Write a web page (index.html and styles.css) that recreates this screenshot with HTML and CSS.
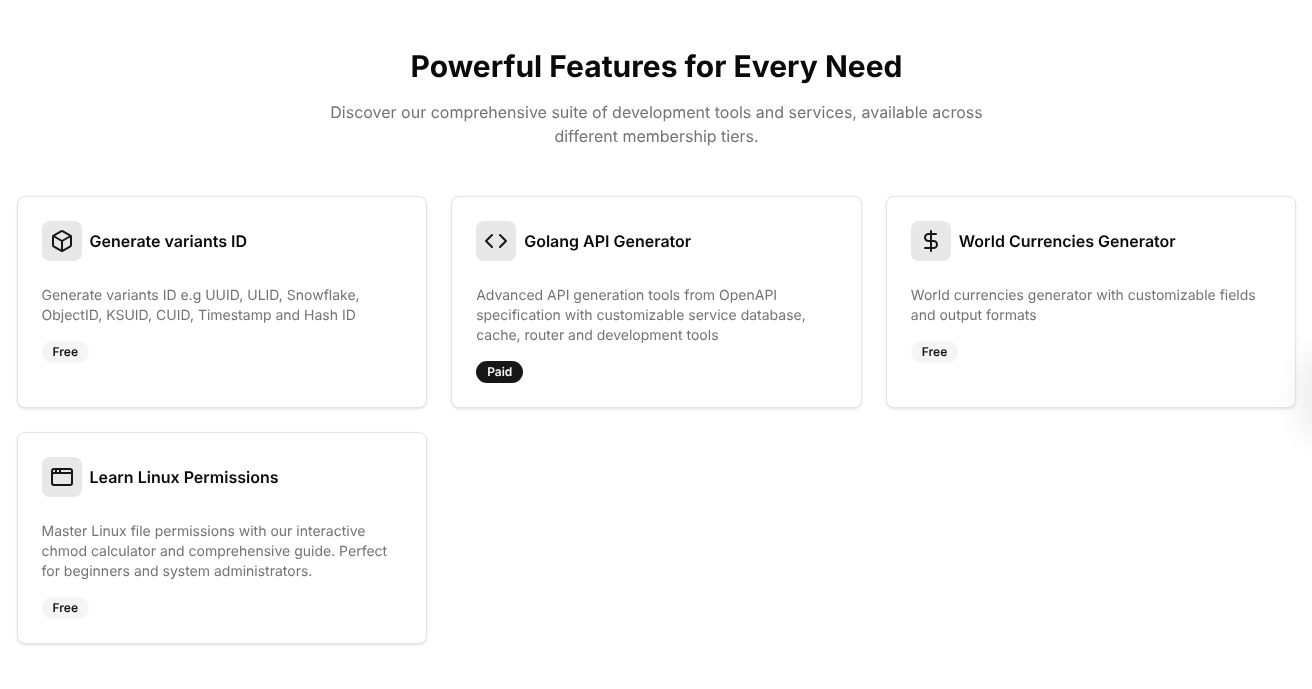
FILE: index.html
```html
<!DOCTYPE html>
<html lang="en">
<head>
<meta charset="utf-8">
<title>Powerful Features for Every Need</title>
<link rel="stylesheet" href="styles.css">
</head>
<body>
<main class="features">
  <header class="intro">
    <h1 class="title">Powerful Features for Every Need</h1>
    <p class="lead">Discover our comprehensive suite of development tools and services, available across different membership tiers.</p>
  </header>
  <section class="grid">
    <article class="card">
      <div class="card-head">
        <span class="icon"><svg viewBox="0 0 24 24" class="glyph"><path d="M21 8a2 2 0 0 0-1-1.730l-7-4a2 2 0 0 0-2 0l-7 4A2 2 0 0 0 3 8v8a2 2 0 0 0 1 1.730l7 4a2 2 0 0 0 2 0l7-4A2 2 0 0 0 21 16Z"/><path d="m3.300 7 8.700 5 8.700-5"/><path d="M12 22V12"/></svg></span>
        <h2 class="card-title">Generate variants ID</h2>
      </div>
      <p class="desc">Generate variants ID e.g UUID, ULID, Snowflake, ObjectID, KSUID, CUID, Timestamp and Hash ID</p>
      <span class="badge">Free</span>
    </article>
    <article class="card">
      <div class="card-head">
        <span class="icon"><svg viewBox="0 0 24 24" class="glyph"><path d="m16 18 6-6-6-6"/><path d="m8 6-6 6 6 6"/></svg></span>
        <h2 class="card-title">Golang API Generator</h2>
      </div>
      <p class="desc">Advanced API generation tools from OpenAPI specification with customizable service database, cache, router and development tools</p>
      <span class="badge badge-paid">Paid</span>
    </article>
    <article class="card">
      <div class="card-head">
        <span class="icon"><svg viewBox="0 0 24 24" class="glyph"><path d="M12 2v20"/><path d="M17 5H9.500a3.500 3.500 0 0 0 0 7h5a3.500 3.500 0 0 1 0 7H6"/></svg></span>
        <h2 class="card-title">World Currencies Generator</h2>
      </div>
      <p class="desc">World currencies generator with customizable fields and output formats</p>
      <span class="badge">Free</span>
    </article>
    <article class="card">
      <div class="card-head">
        <span class="icon"><svg viewBox="0 0 24 24" class="glyph"><rect x="2" y="4" width="20" height="16" rx="2"/><path d="M10 4v4"/><path d="M2 8h20"/><path d="M6 4v4"/></svg></span>
        <h2 class="card-title">Learn Linux Permissions</h2>
      </div>
      <p class="desc">Master Linux file permissions with our interactive chmod calculator and comprehensive guide. Perfect for beginners and system administrators.</p>
      <span class="badge">Free</span>
    </article>
  </section>
</main>
<div class="edge-glow"></div>
</body>
</html>
```
FILE: styles.css
```css
* { box-sizing: border-box; }
html, body { margin: 0; padding: 0; }
body {
  background: #fff;
  color: #0a0a0a;
  font-family: Inter, "Liberation Sans", sans-serif;
  text-rendering: geometricPrecision;
  overflow: hidden;
  height: 689px;
  position: relative;
}
.features {
  width: 1280px;
  margin-left: 16.5px;
  padding-top: 48px;
  will-change: opacity;
}
.intro { text-align: center; margin-bottom: 48px; }
.title {
  margin: 0 0 16px;
  padding-top: .5px;
  height: 36px;
  font-size: 30px;
  line-height: 36px;
  font-weight: 700;
}
.lead {
  margin: 0 auto;
  max-width: 672px;
  font-size: 16px;
  line-height: 24px;
  color: #737373;
}
.grid {
  display: grid;
  grid-template-columns: repeat(3, 1fr);
  gap: 24px;
}
.card {
  border: 1px solid #e5e5e5;
  border-radius: 8px;
  padding: 24px;
  background: #fff;
  box-shadow: 0 1px 3px rgba(0,0,0,.1), 0 1px 2px -1px rgba(0,0,0,.1);
}
.card-head {
  display: flex;
  align-items: center;
  gap: 8px;
  margin-bottom: 24px;
}
.icon {
  width: 40px;
  height: 40px;
  border-radius: 8px;
  background: #e8e8e8;
  display: flex;
  align-items: center;
  justify-content: center;
  flex: none;
}
.glyph {
  width: 24px;
  height: 24px;
  fill: none;
  stroke: #171717;
  stroke-width: 2;
  stroke-linecap: round;
  stroke-linejoin: round;
}
.card-title {
  margin: 0;
  font-size: 16px;
  line-height: 24px;
  font-weight: 600;
}
.desc {
  margin: 0 0 16px;
  padding-top: .5px;
  font-size: 14px;
  line-height: 20px;
  color: #737373;
}
.badge {
  display: inline-block;
  margin-top: -.5px;
  padding: 2px 10px;
  border: 1px solid transparent;
  border-radius: 999px;
  background: #f5f5f5;
  color: #171717;
  font-size: 12px;
  line-height: 16px;
  font-weight: 600;
  vertical-align: top;
}
.badge-paid { background: #171717; color: #fafafa; }
.edge-glow {
  position: absolute;
  right: -28px;
  top: 350px;
  width: 44px;
  height: 90px;
  border-radius: 50%;
  background: rgba(0,0,0,.06);
  filter: blur(12px);
  pointer-events: none;
}
```
